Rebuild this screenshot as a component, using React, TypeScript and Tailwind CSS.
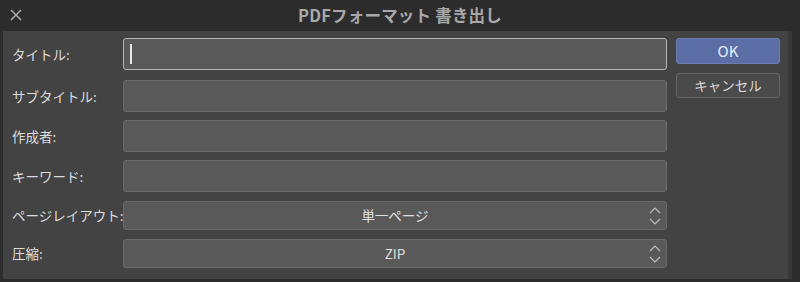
const font = {
  fontFamily: '"Noto Sans CJK JP", "Noto Sans", sans-serif',
};

function Label({ text }: { text: string }) {
  return (
    <div className="w-[120px] shrink-0 pl-[9px] text-[13.5px] text-[#dcdcdc] whitespace-nowrap">
      {text}
    </div>
  );
}

function TextRow({ label, focused }: { label: string; focused?: boolean }) {
  return (
    <div className="flex h-[32px] items-center">
      <Label text={label} />
      <div
        className={
          focused
            ? "flex h-full w-[544px] items-center rounded-[3px] border border-[#b4b4b4] bg-[#595959] pl-[6px]"
            : "flex h-full w-[544px] items-center rounded-[3px] border border-[#6a6a6a] bg-[#595959] pl-[6px]"
        }
      >
        {focused && <div className="h-[20px] w-[2px] bg-[#e6e6e6]" />}
      </div>
    </div>
  );
}

function SelectRow({ label, value }: { label: string; value: string }) {
  return (
    <div className="flex h-[29px] items-center">
      <Label text={label} />
      <div className="relative flex h-full w-[544px] items-center justify-center rounded-[3px] border border-[#6a6a6a] bg-[#595959] text-[13.5px] text-[#e0e0e0]">
        {value}
        <svg
          className="absolute right-[5px] top-[4px]"
          width="12"
          height="20"
          viewBox="0 0 12 20"
        >
          <path
            d="M1 7 L6 2 L11 7 M1 13 L6 18 L11 13"
            fill="none"
            stroke="#bdbdbd"
            strokeWidth="1.2"
          />
        </svg>
      </div>
    </div>
  );
}

export default function App() {
  return (
    <div className="flex h-[282px] w-[800px] flex-col bg-[#2c2c2c]" style={font}>
      {/* TITLE BAR */}
      <div className="relative flex h-[31px] shrink-0 items-center justify-center">
        <svg
          className="absolute left-[10px] top-[9px]"
          width="12"
          height="12"
          viewBox="0 0 12 12"
        >
          <path d="M1 1 L11 11 M11 1 L1 11" stroke="#b8b8b8" strokeWidth="1.4" />
        </svg>
        <span className="text-[16.5px] font-bold tracking-[0.2px] text-[#a8a8a8]">
          PDFフォーマット 書き出し
        </span>
      </div>

      {/* BODY */}
      <div className="flex h-[248px] shrink-0">
        <div className="ml-[3px] flex w-[785px] bg-[#434343] pt-[7px]">
          <div className="flex flex-col">
            <TextRow label="タイトル:" focused />
            <div className="h-[10px]" />
            <TextRow label="サブタイトル:" />
            <div className="h-[8px]" />
            <TextRow label="作成者:" />
            <div className="h-[8px]" />
            <TextRow label="キーワード:" />
            <div className="h-[9px]" />
            <SelectRow label="ページレイアウト:" value="単一ページ" />
            <div className="h-[9px]" />
            <SelectRow label="圧縮:" value="ZIP" />
          </div>

          <div className="ml-[9px] flex w-[104px] flex-col gap-[9px]">
            <button className="h-[26px] rounded-[3px] border border-[#6a7fb5] bg-[#5a6ea5] text-[15px] text-[#e8eefa]">
              OK
            </button>
            <button className="h-[25px] rounded-[3px] border border-[#626262] bg-[#4a4a4a] text-[13.5px] text-[#d8d8d8]">
              キャンセル
            </button>
          </div>
        </div>
        <div className="w-[4px] bg-[#383838]" />
      </div>
    </div>
  );
}
